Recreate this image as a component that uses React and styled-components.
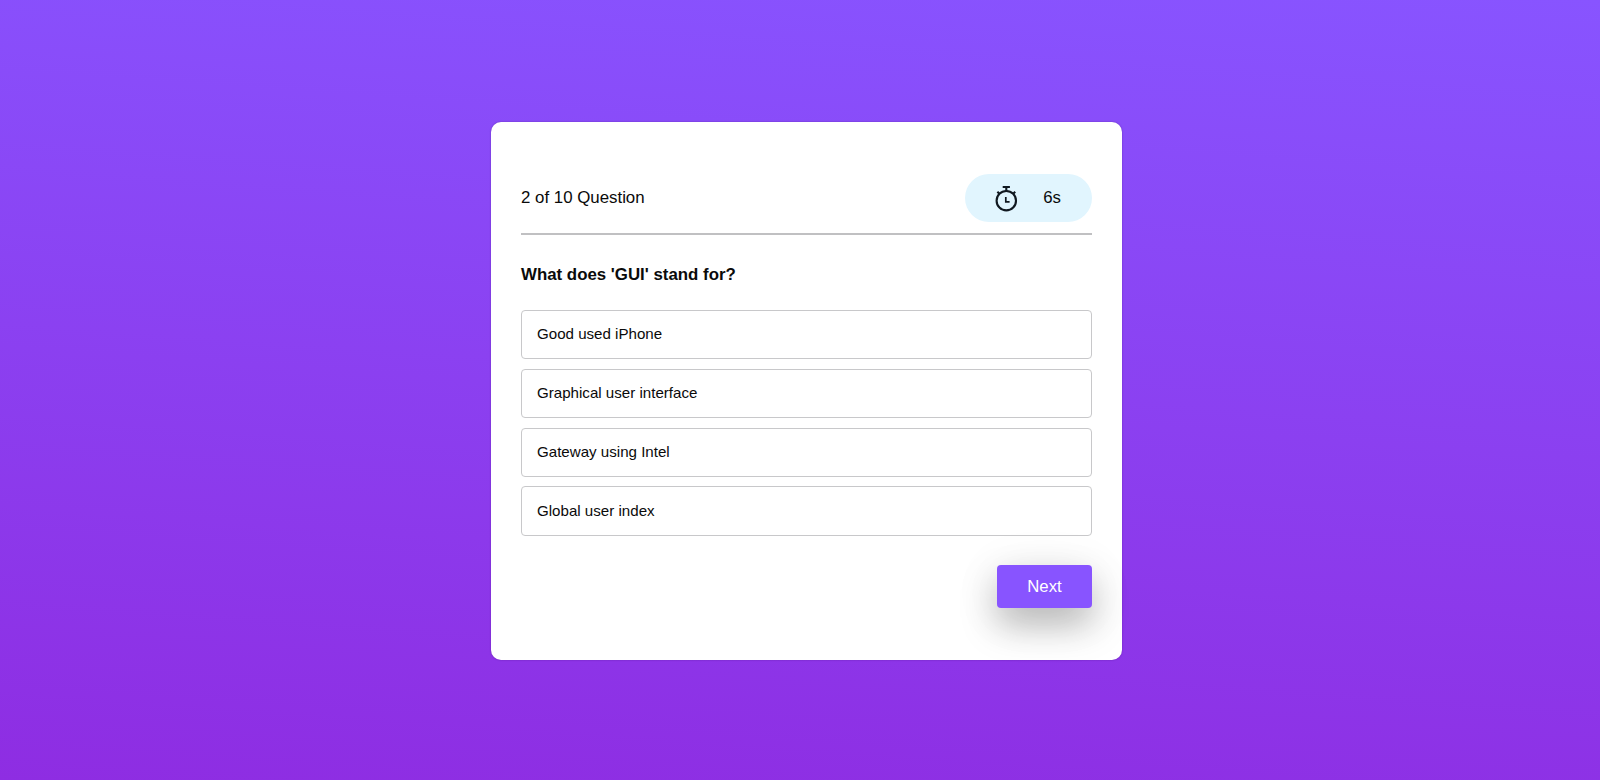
import React from 'react';
import styled, { createGlobalStyle } from 'styled-components';

const GlobalStyle = createGlobalStyle`
  * {
    box-sizing: border-box;
  }

  body {
    margin: 0;
    font-family: "Liberation Sans", Arial, sans-serif;
    color: #0a0a0a;
  }
`

const Page = styled.main`
  display: flex;
  justify-content: center;
  align-items: flex-start;
  height: 780px;
  padding: 122px 0 0 13px;
  background: linear-gradient(184deg, #8854ff, #8e2de2);
`

const Card = styled.section`
  width: 631px;
  height: 538px;
  padding: 52px 30px 0;
  border-radius: 10px;
  background-color: #ffffff;
  box-shadow: 0 0 2px rgba(50, 0, 100, 0.4);
`

const Header = styled.header`
  display: flex;
  justify-content: space-between;
  align-items: center;
  height: 61px;
  padding-bottom: 11px;
  border-bottom: 2px solid #c0c0c2;
`

const Count = styled.span`
  padding-bottom: 1px;
  font-size: 16.85px;
`

const Timer = styled.div`
  display: flex;
  justify-content: space-between;
  align-items: center;
  width: 127px;
  height: 48px;
  padding: 0 31px 0 28px;
  border-radius: 50px;
  background-color: #e1f5fe;
  font-size: 16.8px;
`

const Seconds = styled.span`
  padding-bottom: 1px;
`

const Question = styled.h1`
  margin: 30px 0 26px;
  font-size: 16.85px;
  font-weight: 600;
  line-height: 19px;
`

const Options = styled.div`
  display: grid;
  gap: 9.4px;
`

const Option = styled.button`
  height: 49.4px;
  padding: 0 15px 2px;
  border: 1px solid #c8c8ca;
  border-radius: 4px;
  background: transparent;
  color: inherit;
  font: inherit;
  font-size: 15.12px;
  text-align: left;
`

const NextButton = styled.button`
  display: block;
  width: 95px;
  height: 43px;
  margin: 29.4px 0 0 auto;
  padding: 0;
  border: none;
  border-radius: 4px;
  background-color: #8854ff;
  box-shadow: 0 17px 36px rgba(0, 0, 0, 0.26), 0 6px 50px rgba(0, 0, 0, 0.08);
  color: #ffffff;
  font: inherit;
  font-size: 16.8px;
`

const Stopwatch = () => (
  <svg width="26" height="28" viewBox="0 0 26 28" fill="none" stroke="#101820" strokeWidth="2.1">
    <circle cx="13.3" cy="16.7" r="9.7" />
    <path d="M9.7 3h7.2M13.3 3v4M4.4 7.8l2.2 2.2M22.2 7.8l-2.2 2.2" />
    <path d="M12.8 13v4.8h3.8" strokeWidth="1.7" />
  </svg>
)

const options = ['Good used iPhone', 'Graphical user interface', 'Gateway using Intel', 'Global user index'];

const App = () => {
  return (
    <>
      <GlobalStyle />
      <Page>
        <Card>
          <Header>
            <Count>2 of 10 Question</Count>
            <Timer>
              <Stopwatch />
              <Seconds>6s</Seconds>
            </Timer>
          </Header>
          <Question>What does 'GUI' stand for?</Question>
          <Options>
            {options.map((option) => (
              <Option key={option}>{option}</Option>
            ))}
          </Options>
          <NextButton>Next</NextButton>
        </Card>
      </Page>
    </>
  );
}

export default App;
